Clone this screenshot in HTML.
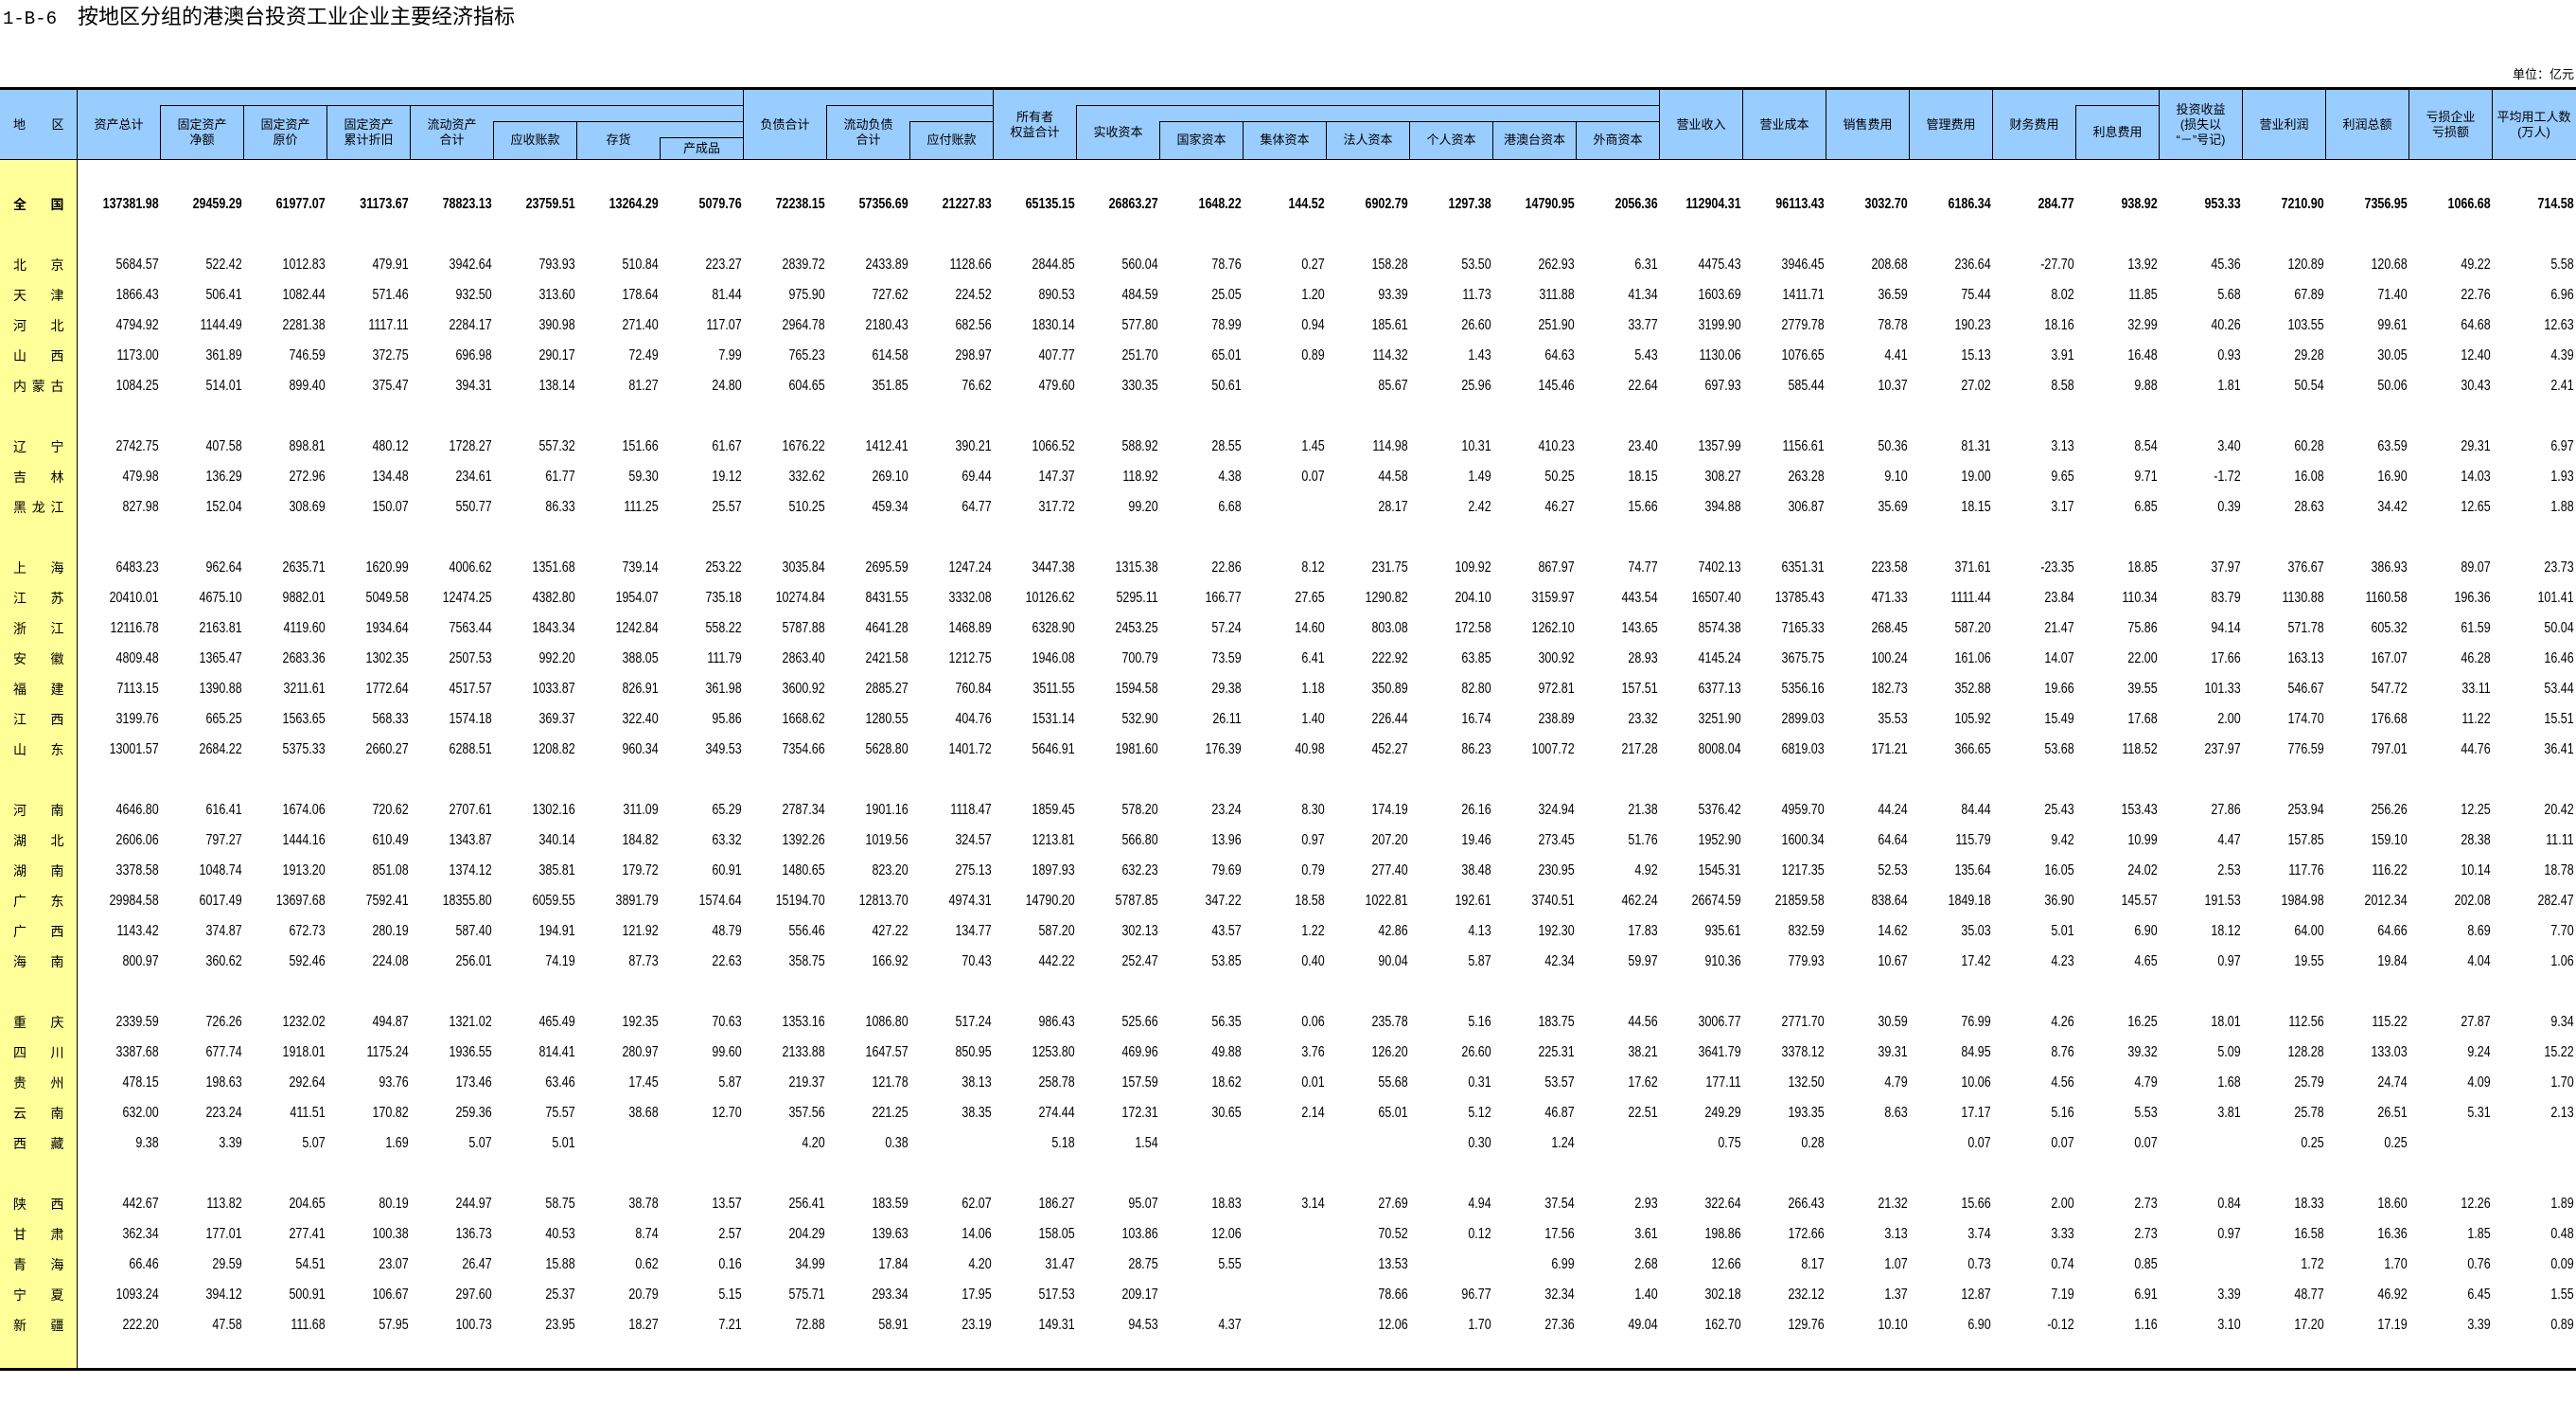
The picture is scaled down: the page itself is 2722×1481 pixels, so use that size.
<!DOCTYPE html>
<html><head><meta charset="utf-8">
<style>
*{margin:0;padding:0;box-sizing:border-box}
body{width:2722px;height:1481px;background:#fff;position:relative;overflow:hidden;font-family:"Liberation Sans","Noto Sans CJK SC",sans-serif;color:#000}
.t{position:absolute;left:3px;top:4px;font-size:22px;line-height:28px;white-space:nowrap}
.t .n{font-family:"Liberation Mono",monospace;font-size:19px;display:inline-block;width:79px}
.u{position:absolute;right:2px;top:70px;font-size:13px;line-height:18px;font-family:"Liberation Sans","Noto Sans CJK SC",sans-serif}
.thick{position:absolute;left:0;width:2722px;height:3px;background:#000}
.hd{position:absolute;left:0;top:94px;width:2722px;height:74px;background:#99ccff}
.yl{position:absolute;left:0;top:168px;width:81.5px;height:1279px;background:#ffff99}
.h{position:absolute;height:1px;background:#000}
.v{position:absolute;width:1px;background:#000}
.c{position:absolute;display:flex;align-items:center;justify-content:center;text-align:center;font-size:13px;line-height:16px;font-family:"Liberation Sans","Noto Sans CJK SC",sans-serif;white-space:nowrap}
.r{position:absolute;left:0;height:32px;line-height:32px;display:grid;grid-template-columns:81.5px repeat(30,88px);font-size:16px;font-family:"Liberation Sans",sans-serif}
.r b{display:flex;justify-content:space-between;padding:0 14px;font-weight:normal;font-size:14px;font-family:"Noto Sans CJK SC",sans-serif}
.r i{font-style:normal;text-align:right;padding-right:3px;transform:scaleX(.78);transform-origin:right center;white-space:nowrap}
.r.bd i{font-weight:bold}
.r.bd b{font-weight:bold}
</style></head><body>
<div class="t"><span class="n">1-B-6</span>按地区分组的港澳台投资工业企业主要经济指标</div>
<div class="u">单位：亿元</div>
<div class="hd"></div>
<div class="yl"></div>
<div class="thick" style="top:92px"></div>
<div class="thick" style="top:1445px"></div>
<div class="h" style="top:168px;left:0;width:2722px"></div>
<div class="h" style="top:111px;left:169.5px;width:616px"></div>
<div class="h" style="top:111px;left:873.5px;width:176px"></div>
<div class="h" style="top:111px;left:1137.5px;width:616px"></div>
<div class="h" style="top:111px;left:2193.5px;width:88px"></div>
<div class="h" style="top:128px;left:521.5px;width:264px"></div>
<div class="h" style="top:128px;left:961.5px;width:88px"></div>
<div class="h" style="top:128px;left:1225.5px;width:528px"></div>
<div class="h" style="top:145px;left:697.5px;width:88px"></div>
<div class="v" style="left:81px;top:94px;height:1352px"></div>
<div class="v" style="left:169px;top:111px;height:57px"></div>
<div class="v" style="left:257px;top:111px;height:57px"></div>
<div class="v" style="left:345px;top:111px;height:57px"></div>
<div class="v" style="left:433px;top:111px;height:57px"></div>
<div class="v" style="left:521px;top:128px;height:40px"></div>
<div class="v" style="left:609px;top:128px;height:40px"></div>
<div class="v" style="left:697px;top:145px;height:23px"></div>
<div class="v" style="left:785px;top:94px;height:74px"></div>
<div class="v" style="left:873px;top:111px;height:57px"></div>
<div class="v" style="left:961px;top:128px;height:40px"></div>
<div class="v" style="left:1049px;top:94px;height:74px"></div>
<div class="v" style="left:1137px;top:111px;height:57px"></div>
<div class="v" style="left:1225px;top:128px;height:40px"></div>
<div class="v" style="left:1313px;top:128px;height:40px"></div>
<div class="v" style="left:1401px;top:128px;height:40px"></div>
<div class="v" style="left:1489px;top:128px;height:40px"></div>
<div class="v" style="left:1577px;top:128px;height:40px"></div>
<div class="v" style="left:1665px;top:128px;height:40px"></div>
<div class="v" style="left:1753px;top:94px;height:74px"></div>
<div class="v" style="left:1841px;top:94px;height:74px"></div>
<div class="v" style="left:1929px;top:94px;height:74px"></div>
<div class="v" style="left:2017px;top:94px;height:74px"></div>
<div class="v" style="left:2105px;top:94px;height:74px"></div>
<div class="v" style="left:2193px;top:111px;height:57px"></div>
<div class="v" style="left:2281px;top:94px;height:74px"></div>
<div class="v" style="left:2369px;top:94px;height:74px"></div>
<div class="v" style="left:2457px;top:94px;height:74px"></div>
<div class="v" style="left:2545px;top:94px;height:74px"></div>
<div class="v" style="left:2633px;top:94px;height:74px"></div>
<div class="c" style="left:0;top:120px;width:81.5px;height:24px;justify-content:space-between;padding:0 14px"><span>地</span><span>区</span></div>
<div class="c" style="left:81.5px;top:120px;width:88px;height:24px">资产总计</div>
<div class="c" style="left:169.5px;top:111px;width:88px;height:57px">固定资产<br>净额</div>
<div class="c" style="left:257.5px;top:111px;width:88px;height:57px">固定资产<br>原价</div>
<div class="c" style="left:345.5px;top:111px;width:88px;height:57px">固定资产<br>累计折旧</div>
<div class="c" style="left:433.5px;top:111px;width:88px;height:57px">流动资产<br>合计</div>
<div class="c" style="left:521.5px;top:128px;width:88px;height:40px">应收账款</div>
<div class="c" style="left:609.5px;top:128px;width:88px;height:40px">存货</div>
<div class="c" style="left:697.5px;top:145px;width:88px;height:23px">产成品</div>
<div class="c" style="left:785.5px;top:120px;width:88px;height:24px">负债合计</div>
<div class="c" style="left:873.5px;top:111px;width:88px;height:57px">流动负债<br>合计</div>
<div class="c" style="left:961.5px;top:128px;width:88px;height:40px">应付账款</div>
<div class="c" style="left:1049.5px;top:94px;width:88px;height:76px">所有者<br>权益合计</div>
<div class="c" style="left:1137.5px;top:111px;width:88px;height:57px">实收资本</div>
<div class="c" style="left:1225.5px;top:128px;width:88px;height:40px">国家资本</div>
<div class="c" style="left:1313.5px;top:128px;width:88px;height:40px">集体资本</div>
<div class="c" style="left:1401.5px;top:128px;width:88px;height:40px">法人资本</div>
<div class="c" style="left:1489.5px;top:128px;width:88px;height:40px">个人资本</div>
<div class="c" style="left:1577.5px;top:128px;width:88px;height:40px">港澳台资本</div>
<div class="c" style="left:1665.5px;top:128px;width:88px;height:40px">外商资本</div>
<div class="c" style="left:1753.5px;top:120px;width:88px;height:24px">营业收入</div>
<div class="c" style="left:1841.5px;top:120px;width:88px;height:24px">营业成本</div>
<div class="c" style="left:1929.5px;top:120px;width:88px;height:24px">销售费用</div>
<div class="c" style="left:2017.5px;top:120px;width:88px;height:24px">管理费用</div>
<div class="c" style="left:2105.5px;top:120px;width:88px;height:24px">财务费用</div>
<div class="c" style="left:2193.5px;top:111px;width:88px;height:57px">利息费用</div>
<div class="c" style="left:2281.5px;top:94px;width:88px;height:76px">投资收益<br>(损失以<br>“－”号记)</div>
<div class="c" style="left:2369.5px;top:120px;width:88px;height:24px">营业利润</div>
<div class="c" style="left:2457.5px;top:120px;width:88px;height:24px">利润总额</div>
<div class="c" style="left:2545.5px;top:94px;width:88px;height:76px">亏损企业<br>亏损额</div>
<div class="c" style="left:2633.5px;top:94px;width:88px;height:76px">平均用工人数<br>(万人)</div>

<div class="r bd" style="top:200px"><b><span>全</span><span>国</span></b><i>137381.98</i><i>29459.29</i><i>61977.07</i><i>31173.67</i><i>78823.13</i><i>23759.51</i><i>13264.29</i><i>5079.76</i><i>72238.15</i><i>57356.69</i><i>21227.83</i><i>65135.15</i><i>26863.27</i><i>1648.22</i><i>144.52</i><i>6902.79</i><i>1297.38</i><i>14790.95</i><i>2056.36</i><i>112904.31</i><i>96113.43</i><i>3032.70</i><i>6186.34</i><i>284.77</i><i>938.92</i><i>953.33</i><i>7210.90</i><i>7356.95</i><i>1066.68</i><i>714.58</i></div>

<div class="r" style="top:264px"><b><span>北</span><span>京</span></b><i>5684.57</i><i>522.42</i><i>1012.83</i><i>479.91</i><i>3942.64</i><i>793.93</i><i>510.84</i><i>223.27</i><i>2839.72</i><i>2433.89</i><i>1128.66</i><i>2844.85</i><i>560.04</i><i>78.76</i><i>0.27</i><i>158.28</i><i>53.50</i><i>262.93</i><i>6.31</i><i>4475.43</i><i>3946.45</i><i>208.68</i><i>236.64</i><i>-27.70</i><i>13.92</i><i>45.36</i><i>120.89</i><i>120.68</i><i>49.22</i><i>5.58</i></div>
<div class="r" style="top:296px"><b><span>天</span><span>津</span></b><i>1866.43</i><i>506.41</i><i>1082.44</i><i>571.46</i><i>932.50</i><i>313.60</i><i>178.64</i><i>81.44</i><i>975.90</i><i>727.62</i><i>224.52</i><i>890.53</i><i>484.59</i><i>25.05</i><i>1.20</i><i>93.39</i><i>11.73</i><i>311.88</i><i>41.34</i><i>1603.69</i><i>1411.71</i><i>36.59</i><i>75.44</i><i>8.02</i><i>11.85</i><i>5.68</i><i>67.89</i><i>71.40</i><i>22.76</i><i>6.96</i></div>
<div class="r" style="top:328px"><b><span>河</span><span>北</span></b><i>4794.92</i><i>1144.49</i><i>2281.38</i><i>1117.11</i><i>2284.17</i><i>390.98</i><i>271.40</i><i>117.07</i><i>2964.78</i><i>2180.43</i><i>682.56</i><i>1830.14</i><i>577.80</i><i>78.99</i><i>0.94</i><i>185.61</i><i>26.60</i><i>251.90</i><i>33.77</i><i>3199.90</i><i>2779.78</i><i>78.78</i><i>190.23</i><i>18.16</i><i>32.99</i><i>40.26</i><i>103.55</i><i>99.61</i><i>64.68</i><i>12.63</i></div>
<div class="r" style="top:360px"><b><span>山</span><span>西</span></b><i>1173.00</i><i>361.89</i><i>746.59</i><i>372.75</i><i>696.98</i><i>290.17</i><i>72.49</i><i>7.99</i><i>765.23</i><i>614.58</i><i>298.97</i><i>407.77</i><i>251.70</i><i>65.01</i><i>0.89</i><i>114.32</i><i>1.43</i><i>64.63</i><i>5.43</i><i>1130.06</i><i>1076.65</i><i>4.41</i><i>15.13</i><i>3.91</i><i>16.48</i><i>0.93</i><i>29.28</i><i>30.05</i><i>12.40</i><i>4.39</i></div>
<div class="r" style="top:392px"><b><span>内</span><span>蒙</span><span>古</span></b><i>1084.25</i><i>514.01</i><i>899.40</i><i>375.47</i><i>394.31</i><i>138.14</i><i>81.27</i><i>24.80</i><i>604.65</i><i>351.85</i><i>76.62</i><i>479.60</i><i>330.35</i><i>50.61</i><i></i><i>85.67</i><i>25.96</i><i>145.46</i><i>22.64</i><i>697.93</i><i>585.44</i><i>10.37</i><i>27.02</i><i>8.58</i><i>9.88</i><i>1.81</i><i>50.54</i><i>50.06</i><i>30.43</i><i>2.41</i></div>

<div class="r" style="top:456px"><b><span>辽</span><span>宁</span></b><i>2742.75</i><i>407.58</i><i>898.81</i><i>480.12</i><i>1728.27</i><i>557.32</i><i>151.66</i><i>61.67</i><i>1676.22</i><i>1412.41</i><i>390.21</i><i>1066.52</i><i>588.92</i><i>28.55</i><i>1.45</i><i>114.98</i><i>10.31</i><i>410.23</i><i>23.40</i><i>1357.99</i><i>1156.61</i><i>50.36</i><i>81.31</i><i>3.13</i><i>8.54</i><i>3.40</i><i>60.28</i><i>63.59</i><i>29.31</i><i>6.97</i></div>
<div class="r" style="top:488px"><b><span>吉</span><span>林</span></b><i>479.98</i><i>136.29</i><i>272.96</i><i>134.48</i><i>234.61</i><i>61.77</i><i>59.30</i><i>19.12</i><i>332.62</i><i>269.10</i><i>69.44</i><i>147.37</i><i>118.92</i><i>4.38</i><i>0.07</i><i>44.58</i><i>1.49</i><i>50.25</i><i>18.15</i><i>308.27</i><i>263.28</i><i>9.10</i><i>19.00</i><i>9.65</i><i>9.71</i><i>-1.72</i><i>16.08</i><i>16.90</i><i>14.03</i><i>1.93</i></div>
<div class="r" style="top:520px"><b><span>黑</span><span>龙</span><span>江</span></b><i>827.98</i><i>152.04</i><i>308.69</i><i>150.07</i><i>550.77</i><i>86.33</i><i>111.25</i><i>25.57</i><i>510.25</i><i>459.34</i><i>64.77</i><i>317.72</i><i>99.20</i><i>6.68</i><i></i><i>28.17</i><i>2.42</i><i>46.27</i><i>15.66</i><i>394.88</i><i>306.87</i><i>35.69</i><i>18.15</i><i>3.17</i><i>6.85</i><i>0.39</i><i>28.63</i><i>34.42</i><i>12.65</i><i>1.88</i></div>

<div class="r" style="top:584px"><b><span>上</span><span>海</span></b><i>6483.23</i><i>962.64</i><i>2635.71</i><i>1620.99</i><i>4006.62</i><i>1351.68</i><i>739.14</i><i>253.22</i><i>3035.84</i><i>2695.59</i><i>1247.24</i><i>3447.38</i><i>1315.38</i><i>22.86</i><i>8.12</i><i>231.75</i><i>109.92</i><i>867.97</i><i>74.77</i><i>7402.13</i><i>6351.31</i><i>223.58</i><i>371.61</i><i>-23.35</i><i>18.85</i><i>37.97</i><i>376.67</i><i>386.93</i><i>89.07</i><i>23.73</i></div>
<div class="r" style="top:616px"><b><span>江</span><span>苏</span></b><i>20410.01</i><i>4675.10</i><i>9882.01</i><i>5049.58</i><i>12474.25</i><i>4382.80</i><i>1954.07</i><i>735.18</i><i>10274.84</i><i>8431.55</i><i>3332.08</i><i>10126.62</i><i>5295.11</i><i>166.77</i><i>27.65</i><i>1290.82</i><i>204.10</i><i>3159.97</i><i>443.54</i><i>16507.40</i><i>13785.43</i><i>471.33</i><i>1111.44</i><i>23.84</i><i>110.34</i><i>83.79</i><i>1130.88</i><i>1160.58</i><i>196.36</i><i>101.41</i></div>
<div class="r" style="top:648px"><b><span>浙</span><span>江</span></b><i>12116.78</i><i>2163.81</i><i>4119.60</i><i>1934.64</i><i>7563.44</i><i>1843.34</i><i>1242.84</i><i>558.22</i><i>5787.88</i><i>4641.28</i><i>1468.89</i><i>6328.90</i><i>2453.25</i><i>57.24</i><i>14.60</i><i>803.08</i><i>172.58</i><i>1262.10</i><i>143.65</i><i>8574.38</i><i>7165.33</i><i>268.45</i><i>587.20</i><i>21.47</i><i>75.86</i><i>94.14</i><i>571.78</i><i>605.32</i><i>61.59</i><i>50.04</i></div>
<div class="r" style="top:680px"><b><span>安</span><span>徽</span></b><i>4809.48</i><i>1365.47</i><i>2683.36</i><i>1302.35</i><i>2507.53</i><i>992.20</i><i>388.05</i><i>111.79</i><i>2863.40</i><i>2421.58</i><i>1212.75</i><i>1946.08</i><i>700.79</i><i>73.59</i><i>6.41</i><i>222.92</i><i>63.85</i><i>300.92</i><i>28.93</i><i>4145.24</i><i>3675.75</i><i>100.24</i><i>161.06</i><i>14.07</i><i>22.00</i><i>17.66</i><i>163.13</i><i>167.07</i><i>46.28</i><i>16.46</i></div>
<div class="r" style="top:712px"><b><span>福</span><span>建</span></b><i>7113.15</i><i>1390.88</i><i>3211.61</i><i>1772.64</i><i>4517.57</i><i>1033.87</i><i>826.91</i><i>361.98</i><i>3600.92</i><i>2885.27</i><i>760.84</i><i>3511.55</i><i>1594.58</i><i>29.38</i><i>1.18</i><i>350.89</i><i>82.80</i><i>972.81</i><i>157.51</i><i>6377.13</i><i>5356.16</i><i>182.73</i><i>352.88</i><i>19.66</i><i>39.55</i><i>101.33</i><i>546.67</i><i>547.72</i><i>33.11</i><i>53.44</i></div>
<div class="r" style="top:744px"><b><span>江</span><span>西</span></b><i>3199.76</i><i>665.25</i><i>1563.65</i><i>568.33</i><i>1574.18</i><i>369.37</i><i>322.40</i><i>95.86</i><i>1668.62</i><i>1280.55</i><i>404.76</i><i>1531.14</i><i>532.90</i><i>26.11</i><i>1.40</i><i>226.44</i><i>16.74</i><i>238.89</i><i>23.32</i><i>3251.90</i><i>2899.03</i><i>35.53</i><i>105.92</i><i>15.49</i><i>17.68</i><i>2.00</i><i>174.70</i><i>176.68</i><i>11.22</i><i>15.51</i></div>
<div class="r" style="top:776px"><b><span>山</span><span>东</span></b><i>13001.57</i><i>2684.22</i><i>5375.33</i><i>2660.27</i><i>6288.51</i><i>1208.82</i><i>960.34</i><i>349.53</i><i>7354.66</i><i>5628.80</i><i>1401.72</i><i>5646.91</i><i>1981.60</i><i>176.39</i><i>40.98</i><i>452.27</i><i>86.23</i><i>1007.72</i><i>217.28</i><i>8008.04</i><i>6819.03</i><i>171.21</i><i>366.65</i><i>53.68</i><i>118.52</i><i>237.97</i><i>776.59</i><i>797.01</i><i>44.76</i><i>36.41</i></div>

<div class="r" style="top:840px"><b><span>河</span><span>南</span></b><i>4646.80</i><i>616.41</i><i>1674.06</i><i>720.62</i><i>2707.61</i><i>1302.16</i><i>311.09</i><i>65.29</i><i>2787.34</i><i>1901.16</i><i>1118.47</i><i>1859.45</i><i>578.20</i><i>23.24</i><i>8.30</i><i>174.19</i><i>26.16</i><i>324.94</i><i>21.38</i><i>5376.42</i><i>4959.70</i><i>44.24</i><i>84.44</i><i>25.43</i><i>153.43</i><i>27.86</i><i>253.94</i><i>256.26</i><i>12.25</i><i>20.42</i></div>
<div class="r" style="top:872px"><b><span>湖</span><span>北</span></b><i>2606.06</i><i>797.27</i><i>1444.16</i><i>610.49</i><i>1343.87</i><i>340.14</i><i>184.82</i><i>63.32</i><i>1392.26</i><i>1019.56</i><i>324.57</i><i>1213.81</i><i>566.80</i><i>13.96</i><i>0.97</i><i>207.20</i><i>19.46</i><i>273.45</i><i>51.76</i><i>1952.90</i><i>1600.34</i><i>64.64</i><i>115.79</i><i>9.42</i><i>10.99</i><i>4.47</i><i>157.85</i><i>159.10</i><i>28.38</i><i>11.11</i></div>
<div class="r" style="top:904px"><b><span>湖</span><span>南</span></b><i>3378.58</i><i>1048.74</i><i>1913.20</i><i>851.08</i><i>1374.12</i><i>385.81</i><i>179.72</i><i>60.91</i><i>1480.65</i><i>823.20</i><i>275.13</i><i>1897.93</i><i>632.23</i><i>79.69</i><i>0.79</i><i>277.40</i><i>38.48</i><i>230.95</i><i>4.92</i><i>1545.31</i><i>1217.35</i><i>52.53</i><i>135.64</i><i>16.05</i><i>24.02</i><i>2.53</i><i>117.76</i><i>116.22</i><i>10.14</i><i>18.78</i></div>
<div class="r" style="top:936px"><b><span>广</span><span>东</span></b><i>29984.58</i><i>6017.49</i><i>13697.68</i><i>7592.41</i><i>18355.80</i><i>6059.55</i><i>3891.79</i><i>1574.64</i><i>15194.70</i><i>12813.70</i><i>4974.31</i><i>14790.20</i><i>5787.85</i><i>347.22</i><i>18.58</i><i>1022.81</i><i>192.61</i><i>3740.51</i><i>462.24</i><i>26674.59</i><i>21859.58</i><i>838.64</i><i>1849.18</i><i>36.90</i><i>145.57</i><i>191.53</i><i>1984.98</i><i>2012.34</i><i>202.08</i><i>282.47</i></div>
<div class="r" style="top:968px"><b><span>广</span><span>西</span></b><i>1143.42</i><i>374.87</i><i>672.73</i><i>280.19</i><i>587.40</i><i>194.91</i><i>121.92</i><i>48.79</i><i>556.46</i><i>427.22</i><i>134.77</i><i>587.20</i><i>302.13</i><i>43.57</i><i>1.22</i><i>42.86</i><i>4.13</i><i>192.30</i><i>17.83</i><i>935.61</i><i>832.59</i><i>14.62</i><i>35.03</i><i>5.01</i><i>6.90</i><i>18.12</i><i>64.00</i><i>64.66</i><i>8.69</i><i>7.70</i></div>
<div class="r" style="top:1000px"><b><span>海</span><span>南</span></b><i>800.97</i><i>360.62</i><i>592.46</i><i>224.08</i><i>256.01</i><i>74.19</i><i>87.73</i><i>22.63</i><i>358.75</i><i>166.92</i><i>70.43</i><i>442.22</i><i>252.47</i><i>53.85</i><i>0.40</i><i>90.04</i><i>5.87</i><i>42.34</i><i>59.97</i><i>910.36</i><i>779.93</i><i>10.67</i><i>17.42</i><i>4.23</i><i>4.65</i><i>0.97</i><i>19.55</i><i>19.84</i><i>4.04</i><i>1.06</i></div>

<div class="r" style="top:1064px"><b><span>重</span><span>庆</span></b><i>2339.59</i><i>726.26</i><i>1232.02</i><i>494.87</i><i>1321.02</i><i>465.49</i><i>192.35</i><i>70.63</i><i>1353.16</i><i>1086.80</i><i>517.24</i><i>986.43</i><i>525.66</i><i>56.35</i><i>0.06</i><i>235.78</i><i>5.16</i><i>183.75</i><i>44.56</i><i>3006.77</i><i>2771.70</i><i>30.59</i><i>76.99</i><i>4.26</i><i>16.25</i><i>18.01</i><i>112.56</i><i>115.22</i><i>27.87</i><i>9.34</i></div>
<div class="r" style="top:1096px"><b><span>四</span><span>川</span></b><i>3387.68</i><i>677.74</i><i>1918.01</i><i>1175.24</i><i>1936.55</i><i>814.41</i><i>280.97</i><i>99.60</i><i>2133.88</i><i>1647.57</i><i>850.95</i><i>1253.80</i><i>469.96</i><i>49.88</i><i>3.76</i><i>126.20</i><i>26.60</i><i>225.31</i><i>38.21</i><i>3641.79</i><i>3378.12</i><i>39.31</i><i>84.95</i><i>8.76</i><i>39.32</i><i>5.09</i><i>128.28</i><i>133.03</i><i>9.24</i><i>15.22</i></div>
<div class="r" style="top:1128px"><b><span>贵</span><span>州</span></b><i>478.15</i><i>198.63</i><i>292.64</i><i>93.76</i><i>173.46</i><i>63.46</i><i>17.45</i><i>5.87</i><i>219.37</i><i>121.78</i><i>38.13</i><i>258.78</i><i>157.59</i><i>18.62</i><i>0.01</i><i>55.68</i><i>0.31</i><i>53.57</i><i>17.62</i><i>177.11</i><i>132.50</i><i>4.79</i><i>10.06</i><i>4.56</i><i>4.79</i><i>1.68</i><i>25.79</i><i>24.74</i><i>4.09</i><i>1.70</i></div>
<div class="r" style="top:1160px"><b><span>云</span><span>南</span></b><i>632.00</i><i>223.24</i><i>411.51</i><i>170.82</i><i>259.36</i><i>75.57</i><i>38.68</i><i>12.70</i><i>357.56</i><i>221.25</i><i>38.35</i><i>274.44</i><i>172.31</i><i>30.65</i><i>2.14</i><i>65.01</i><i>5.12</i><i>46.87</i><i>22.51</i><i>249.29</i><i>193.35</i><i>8.63</i><i>17.17</i><i>5.16</i><i>5.53</i><i>3.81</i><i>25.78</i><i>26.51</i><i>5.31</i><i>2.13</i></div>
<div class="r" style="top:1192px"><b><span>西</span><span>藏</span></b><i>9.38</i><i>3.39</i><i>5.07</i><i>1.69</i><i>5.07</i><i>5.01</i><i></i><i></i><i>4.20</i><i>0.38</i><i></i><i>5.18</i><i>1.54</i><i></i><i></i><i></i><i>0.30</i><i>1.24</i><i></i><i>0.75</i><i>0.28</i><i></i><i>0.07</i><i>0.07</i><i>0.07</i><i></i><i>0.25</i><i>0.25</i><i></i><i></i></div>

<div class="r" style="top:1256px"><b><span>陕</span><span>西</span></b><i>442.67</i><i>113.82</i><i>204.65</i><i>80.19</i><i>244.97</i><i>58.75</i><i>38.78</i><i>13.57</i><i>256.41</i><i>183.59</i><i>62.07</i><i>186.27</i><i>95.07</i><i>18.83</i><i>3.14</i><i>27.69</i><i>4.94</i><i>37.54</i><i>2.93</i><i>322.64</i><i>266.43</i><i>21.32</i><i>15.66</i><i>2.00</i><i>2.73</i><i>0.84</i><i>18.33</i><i>18.60</i><i>12.26</i><i>1.89</i></div>
<div class="r" style="top:1288px"><b><span>甘</span><span>肃</span></b><i>362.34</i><i>177.01</i><i>277.41</i><i>100.38</i><i>136.73</i><i>40.53</i><i>8.74</i><i>2.57</i><i>204.29</i><i>139.63</i><i>14.06</i><i>158.05</i><i>103.86</i><i>12.06</i><i></i><i>70.52</i><i>0.12</i><i>17.56</i><i>3.61</i><i>198.86</i><i>172.66</i><i>3.13</i><i>3.74</i><i>3.33</i><i>2.73</i><i>0.97</i><i>16.58</i><i>16.36</i><i>1.85</i><i>0.48</i></div>
<div class="r" style="top:1320px"><b><span>青</span><span>海</span></b><i>66.46</i><i>29.59</i><i>54.51</i><i>23.07</i><i>26.47</i><i>15.88</i><i>0.62</i><i>0.16</i><i>34.99</i><i>17.84</i><i>4.20</i><i>31.47</i><i>28.75</i><i>5.55</i><i></i><i>13.53</i><i></i><i>6.99</i><i>2.68</i><i>12.66</i><i>8.17</i><i>1.07</i><i>0.73</i><i>0.74</i><i>0.85</i><i></i><i>1.72</i><i>1.70</i><i>0.76</i><i>0.09</i></div>
<div class="r" style="top:1352px"><b><span>宁</span><span>夏</span></b><i>1093.24</i><i>394.12</i><i>500.91</i><i>106.67</i><i>297.60</i><i>25.37</i><i>20.79</i><i>5.15</i><i>575.71</i><i>293.34</i><i>17.95</i><i>517.53</i><i>209.17</i><i></i><i></i><i>78.66</i><i>96.77</i><i>32.34</i><i>1.40</i><i>302.18</i><i>232.12</i><i>1.37</i><i>12.87</i><i>7.19</i><i>6.91</i><i>3.39</i><i>48.77</i><i>46.92</i><i>6.45</i><i>1.55</i></div>
<div class="r" style="top:1384px"><b><span>新</span><span>疆</span></b><i>222.20</i><i>47.58</i><i>111.68</i><i>57.95</i><i>100.73</i><i>23.95</i><i>18.27</i><i>7.21</i><i>72.88</i><i>58.91</i><i>23.19</i><i>149.31</i><i>94.53</i><i>4.37</i><i></i><i>12.06</i><i>1.70</i><i>27.36</i><i>49.04</i><i>162.70</i><i>129.76</i><i>10.10</i><i>6.90</i><i>-0.12</i><i>1.16</i><i>3.10</i><i>17.20</i><i>17.19</i><i>3.39</i><i>0.89</i></div>
</body></html>
